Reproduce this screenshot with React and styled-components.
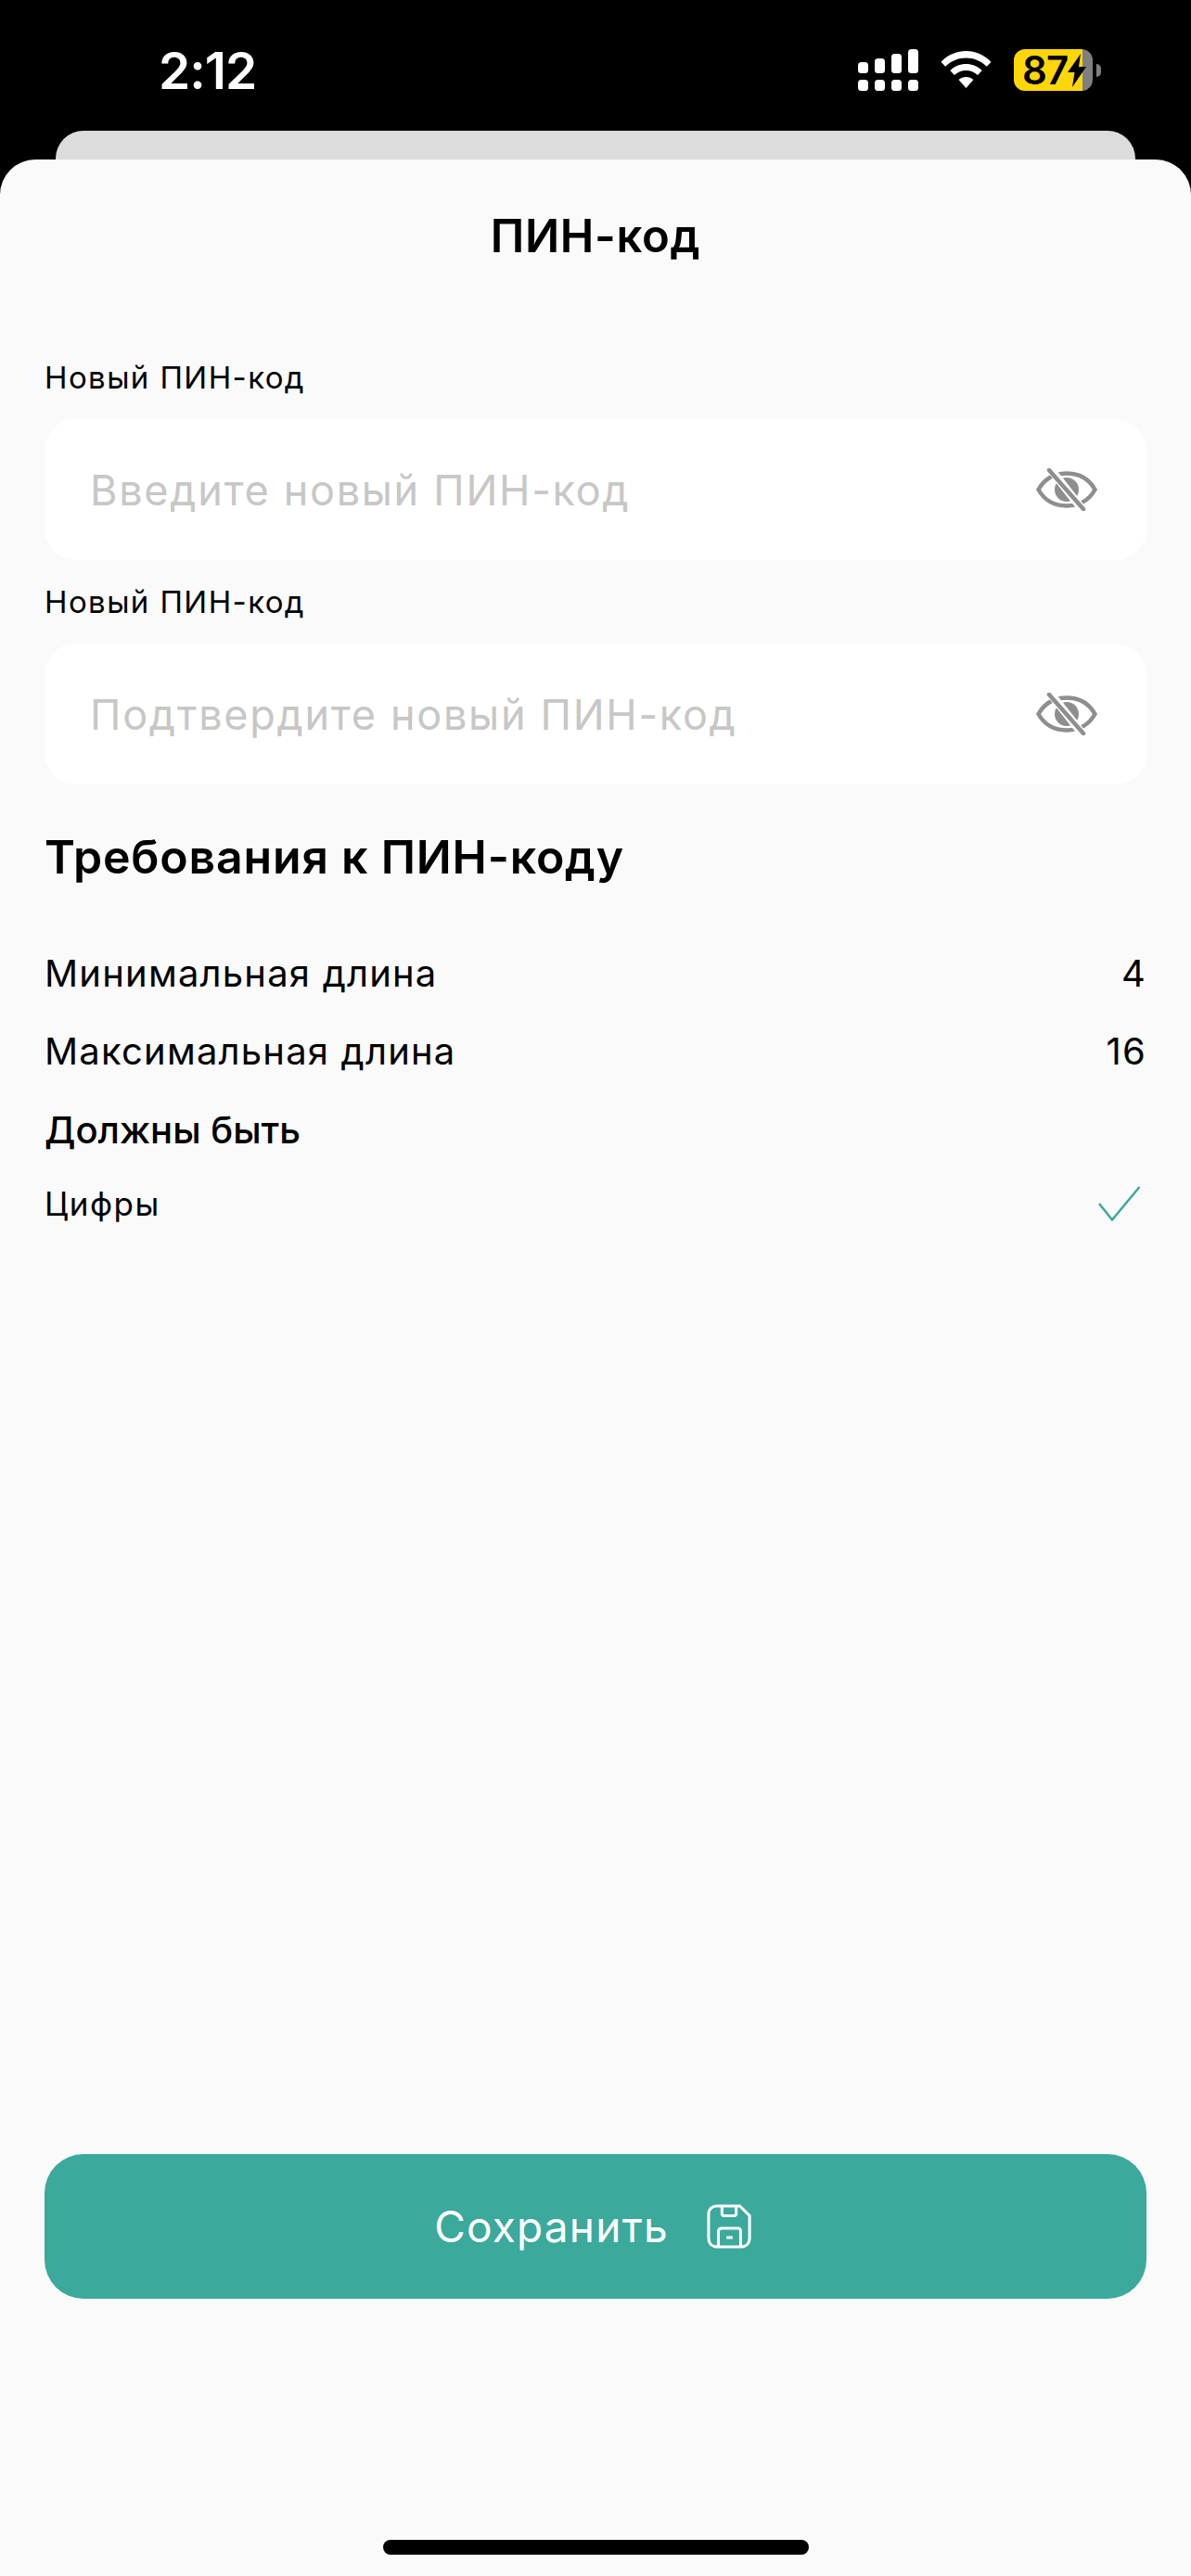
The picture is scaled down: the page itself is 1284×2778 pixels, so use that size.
import React from 'react';
import styled, { createGlobalStyle } from 'styled-components';

const GlobalStyle = createGlobalStyle`
  html, body {
    margin: 0;
    padding: 0;
    background: #000;
  }
  * {
    box-sizing: border-box;
  }
`;

const SignalIcon = () => (
  <svg width="65" height="45" viewBox="0 0 65 45" fill="#fff">
    <rect x="0" y="14" width="11" height="12" rx="3.5" />
    <rect x="18" y="10" width="11" height="16" rx="3.5" />
    <rect x="36" y="5" width="11" height="21" rx="3.5" />
    <rect x="54" y="0" width="11" height="26" rx="3.5" />
    <rect x="0" y="33" width="11" height="12" rx="3.5" />
    <rect x="18" y="33" width="11" height="12" rx="3.5" />
    <rect x="36" y="33" width="11" height="12" rx="3.5" />
    <rect x="54" y="33" width="11" height="12" rx="3.5" />
  </svg>
);

const WifiIcon = () => (
  <svg width="57" height="41" viewBox="0 0 58 44" fill="#fff">
    <path d="M29 0C18 0 8 4.500 0 12.500L5 18C11.500 11.500 20 8 29 8C38 8 46.500 11.500 53 18L58 12.500C50 4.500 40 0 29 0Z" />
    <path d="M29 15C22 15 15.500 17.800 10.500 22.500L15.500 28C19 24.500 24 22.500 29 22.500C34 22.500 39 24.500 42.500 28L47.500 22.500C42.500 17.800 36 15 29 15Z" />
    <path d="M29 30C25.800 30 22.800 31.200 20.500 33.300L29 43L37.500 33.300C35.200 31.200 32.200 30 29 30Z" />
  </svg>
);

const BoltIcon = () => (
  <svg width="20" height="36" viewBox="0 0 20 36" fill="#000">
    <path d="M14 0L0 20H7.500L5 36L20 14H12Z" />
  </svg>
);

const EyeOffIcon = () => (
  <svg width="66" height="46" viewBox="0 0 66 46" fill="none">
    <path
      d="M2.500 23C9 11.500 20 5.500 33 5.500C46 5.500 57 11.500 63.500 23C57 34.500 46 40.500 33 40.500C20 40.500 9 34.500 2.500 23Z"
      stroke="#8e8e8e"
      strokeWidth="4.500"
    />
    <circle cx="33" cy="23" r="13" fill="#8e8e8e" />
    <path d="M14 -1L52 47" stroke="#fff" strokeWidth="9" />
    <path d="M14 2L51 44" stroke="#8e8e8e" strokeWidth="4.500" strokeLinecap="round" />
  </svg>
);

const CheckIcon = () => (
  <svg width="46" height="38" viewBox="0 0 46 38" fill="none">
    <path d="M1 19L15 36.500L44.500 1" stroke="#3ba99c" strokeWidth="2.500" />
  </svg>
);

const SaveIcon = () => (
  <svg width="48" height="48" viewBox="0 0 50 50" fill="none" stroke="#fff" strokeWidth="3.200">
    <path d="M11 2H37L48 13V38C48 44 44 48 38 48H12C6 48 2 44 2 38V11C2 6 6 2 11 2Z" />
    <path d="M17 2V11C17 12 18 13 19 13H31C32 13 33 12 33 11V2" />
    <path d="M13 48V31C13 28 15 27 17 27H35C37 27 38 28 38 31V48" />
    <path d="M22 37.500H29" />
  </svg>
);

function App() {
  return (
    <Page>
      <GlobalStyle />
      <StatusBar>
        <Time>2:12</Time>
        <StatusIcons>
          <SignalIcon />
          <WifiIcon />
          <Battery>
            <BatteryFill>
              <BatteryLevel>87</BatteryLevel>
              <BoltIcon />
            </BatteryFill>
            <BatteryCap />
          </Battery>
        </StatusIcons>
      </StatusBar>
      <BackCard />
      <Sheet>
        <Title>ПИН-код</Title>
        <Fields>
          <Field>
            <FieldLabel>Новый ПИН-код</FieldLabel>
            <InputBox>
              <Input type="password" placeholder="Введите новый ПИН-код" />
              <EyeOffIcon />
            </InputBox>
          </Field>
          <Field>
            <FieldLabel>Новый ПИН-код</FieldLabel>
            <InputBox>
              <Input type="password" placeholder="Подтвердите новый ПИН-код" />
              <EyeOffIcon />
            </InputBox>
          </Field>
        </Fields>
        <Heading>Требования к ПИН-коду</Heading>
        <RuleList>
          <RuleRow>
            <span>Минимальная длина</span>
            <span>4</span>
          </RuleRow>
          <RuleRow>
            <span>Максимальная длина</span>
            <span>16</span>
          </RuleRow>
        </RuleList>
        <SubHeading>Должны быть</SubHeading>
        <CheckRow>
          <span>Цифры</span>
          <CheckIcon />
        </CheckRow>
        <SaveButton>
          Сохранить
          <SaveIcon />
        </SaveButton>
        <HomeIndicator />
      </Sheet>
    </Page>
  );
}

export default App;

const Page = styled.div`
  width: 1284px;
  height: 2778px;
  overflow: hidden;
  display: flex;
  flex-direction: column;
  background: #000;
  font-family: Inter, "Noto Sans", sans-serif;
`;

const StatusBar = styled.div`
  height: 141px;
  flex-shrink: 0;
  padding: 49px 97px 0 171px;
  display: flex;
  justify-content: space-between;
  align-items: flex-start;
`;

const Time = styled.div`
  color: #fff;
  font-size: 55px;
  font-weight: 600;
  line-height: 54px;
  letter-spacing: -1px;
`;

const StatusIcons = styled.div`
  display: flex;
  align-items: center;
  gap: 23px;
  margin-top: 4px;
`;

const Battery = styled.div`
  display: flex;
  align-items: center;
  height: 45px;
`;

const BatteryFill = styled.div`
  width: 85px;
  height: 45px;
  border-radius: 12px;
  padding-left: 9px;
  display: flex;
  align-items: center;
  background: linear-gradient(90deg, #ffd60a 0, #ffd60a 74px, #7f7f7f 74px);
`;

const BatteryLevel = styled.span`
  color: #000;
  font-size: 42px;
  font-weight: 600;
  line-height: 1;
  letter-spacing: -1px;
`;

const BatteryCap = styled.div`
  width: 5px;
  height: 14px;
  margin-left: 4px;
  border-radius: 0 7px 7px 0;
  background: #7f7f7f;
`;

const BackCard = styled.div`
  height: 31px;
  flex-shrink: 0;
  margin: 0 60px;
  border-radius: 30px 30px 0 0;
  background: #dcdcdc;
`;

const Sheet = styled.div`
  flex: 1;
  padding: 0 48px;
  display: flex;
  flex-direction: column;
  border-radius: 38px 38px 0 0;
  background: #fafafa;
  color: #000;
`;

const Title = styled.h1`
  margin: 54px 0 0;
  text-align: center;
  font-size: 49px;
  font-weight: 600;
  line-height: 58px;
  letter-spacing: 0.7px;
`;

const Fields = styled.div`
  display: flex;
  flex-direction: column;
  gap: 26px;
  margin-top: 104px;
`;

const Field = styled.div`
  display: flex;
  flex-direction: column;
  gap: 26px;
`;

const FieldLabel = styled.div`
  font-size: 33px;
  line-height: 38px;
  letter-spacing: 1.4px;
`;

const InputBox = styled.div`
  height: 152px;
  padding: 0 53px 0 49px;
  display: flex;
  align-items: center;
  border-radius: 34px;
  background: #fff;
`;

const Input = styled.input`
  flex: 1;
  min-width: 0;
  padding: 0;
  border: 0;
  outline: 0;
  background: transparent;
  font-family: inherit;
  font-size: 45px;
  letter-spacing: 1.7px;

  &::placeholder {
    color: #c7c7c7;
    opacity: 1;
  }
`;

const Heading = styled.h2`
  margin: 49px 0 0;
  font-size: 50px;
  font-weight: 600;
  line-height: 58px;
  letter-spacing: 0.8px;
`;

const RuleList = styled.div`
  margin-top: 54px;
`;

const RuleRow = styled.div`
  display: flex;
  justify-content: space-between;
  align-items: center;
  height: 84px;
  font-size: 40px;
  letter-spacing: 1.2px;
`;

const SubHeading = styled.div`
  font-size: 40px;
  font-weight: 500;
  line-height: 88px;
`;

const CheckRow = styled.div`
  display: flex;
  justify-content: space-between;
  align-items: center;
  height: 70px;
  padding-right: 6px;
  font-size: 35px;
  letter-spacing: 1.5px;
`;

const SaveButton = styled.button`
  width: 100%;
  height: 156px;
  margin-top: auto;
  padding: 0 6px 0 0;
  border: 0;
  border-radius: 42px;
  display: flex;
  align-items: center;
  justify-content: center;
  gap: 41px;
  background: #3ba99c;
  color: #fff;
  font-family: inherit;
  font-size: 46px;
  letter-spacing: 1.2px;
`;

const HomeIndicator = styled.div`
  width: 459px;
  height: 16px;
  flex-shrink: 0;
  margin: 260px auto 23px;
  border-radius: 8px;
  background: #000;
`;
